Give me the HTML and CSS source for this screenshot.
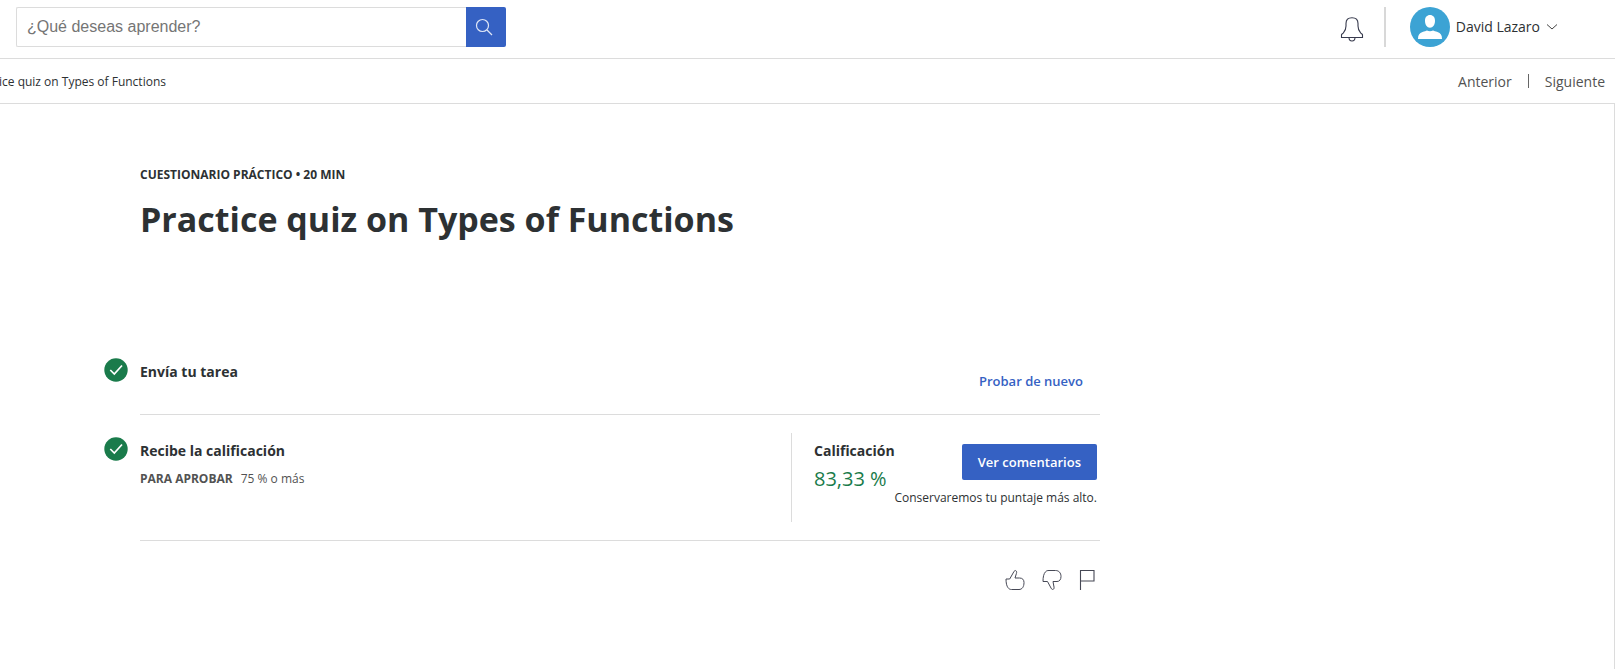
FILE: index.html
```html
<!DOCTYPE html>
<html lang="es">
<head>
<meta charset="utf-8">
<title>Practice quiz on Types of Functions</title>
<link rel="stylesheet" href="styles.css">
</head>
<body>
<header class="topbar">
  <form class="search">
    <input class="search-input" type="text" placeholder="¿Qué deseas aprender?" aria-label="¿Qué deseas aprender?">
    <button class="search-button" type="button" aria-label="Buscar">
      <svg width="18" height="18" viewBox="0 0 18 18" fill="none" stroke="#dfe6f6" stroke-width="1.2"><circle cx="7.5" cy="7.5" r="6"/><path d="M12 12l5 5"/></svg>
    </button>
  </form>
  <div class="account">
    <button class="icon-button" type="button" aria-label="Notificaciones">
      <svg width="24" height="26" viewBox="0 0 24 26" fill="none" stroke="#373a4d" stroke-width="1.1"><path d="M1.500 21.500v-2.700c0-.8 1-1 1.900-2C5.500 14.500 6 12.500 6 10V7.500C6 3.500 8.500 1.700 12 1.700S18 3.500 18 7.500V10c0 2.500.5 4.500 2.600 6.800.9 1 1.900 1.200 1.900 2v2.700z"/><path d="M9 21.500c0 2.500 1.200 3.500 3 3.500s3-1 3-3.500"/></svg>
    </button>
    <span class="account-divider"></span>
    <button class="profile" type="button">
      <svg width="40" height="40" viewBox="0 0 40 40"><circle cx="20" cy="20" r="20" fill="#3ca3d4"/><path fill="#fff" d="M20 8c3 0 5 2.200 5 5.700 0 3.800-2 7-5 7s-5-3.200-5-7C15 10.200 17 8 20 8zM8 32c0-4 1.300-6 4.500-7 2-.6 3.500-1 4.500-1.500 1.800 1 4.200 1 6 0 1 .5 2.500.9 4.500 1.500 3.200 1 4.500 3 4.500 7z"/></svg>
      <span class="profile-name">David Lazaro</span>
      <svg class="chevron" width="12" height="8" viewBox="0 0 12 8" fill="none" stroke="#444" stroke-width="1"><path d="M1 1.500l5 4.500 5-4.500"/></svg>
    </button>
  </div>
</header>
<nav class="subnav">
  <span class="crumb">ice quiz on Types of Functions</span>
  <div class="pager">
    <a href="#">Anterior</a>
    <span class="pager-divider"></span>
    <a href="#">Siguiente</a>
  </div>
</nav>
<main class="page">
  <div class="content">
    <p class="kicker">CUESTIONARIO PRÁCTICO • 20 MIN</p>
    <h1 class="title">Practice quiz on Types of Functions</h1>
    <section class="step step-submit">
      <svg class="check" width="24" height="24" viewBox="0 0 24 24"><circle cx="12" cy="12" r="11.700" fill="#1a7b4b"/><path d="M6.300 12l4 4L18 7.500" fill="none" stroke="#fff" stroke-width="1.700"/></svg>
      <h2 class="heading">Envía tu tarea</h2>
      <button class="retry" type="button">Probar de nuevo</button>
    </section>
    <section class="step step-grade">
      <svg class="check" width="24" height="24" viewBox="0 0 24 24"><circle cx="12" cy="12" r="11.700" fill="#1a7b4b"/><path d="M6.300 12l4 4L18 7.500" fill="none" stroke="#fff" stroke-width="1.700"/></svg>
      <div class="receive">
        <h2 class="heading">Recibe la calificación</h2>
        <p class="passing"><strong>PARA APROBAR</strong><span>75 % o más</span></p>
      </div>
      <div class="result">
        <div class="grade">
          <h2 class="heading">Calificación</h2>
          <p class="score">83,33 %</p>
        </div>
        <div class="feedback">
          <button class="comments" type="button">Ver comentarios</button>
          <p class="note">Conservaremos tu puntaje más alto.</p>
        </div>
      </div>
    </section>
    <div class="reactions">
      <button class="icon-button" type="button" aria-label="Me gusta">
        <svg width="20" height="22" viewBox="0 0 20 22" fill="none" stroke="#464855" stroke-width="1"><path d="M1 10h3.700L8.700 3c.6-1.200 1.300-1.700 2.100-1.300 1 .5 1 1.600.6 2.800L10 9h4.500c3 0 4.500 1.800 4.500 4.500 0 4.500-2 7-5 7H6.500c-1.500 0-2.500-.5-3.500-1.800C1.700 17 1 14 1 10z"/></svg>
      </button>
      <button class="icon-button" type="button" aria-label="No me gusta">
        <svg width="20" height="22" viewBox="0 0 20 22" fill="none" stroke="#464855" stroke-width="1"><path d="M1 12.500C1 8 1.700 4.800 3.500 2.800 4.500 1.700 5.500 1.500 7 1.500h6.500c3.500 0 5.500 2.500 5.500 6 0 3-1.500 5-4 5h-4l1 5.500c.2 1.200 0 2-.8 2.300-.9.400-1.600 0-2.200-1.300l-3.500-6.500z"/></svg>
      </button>
      <button class="icon-button" type="button" aria-label="Denunciar">
        <svg width="16" height="22" viewBox="0 0 16 22" fill="none" stroke="#464855" stroke-width="1.100"><path d="M1.500 21V1.500h13.500v10.500H1.500"/></svg>
      </button>
    </div>
  </div>
</main>
</body>
</html>
```
FILE: styles.css
```css
* { box-sizing: border-box; }
body {
  margin: 0;
  min-height: 100vh;
  display: flex;
  flex-direction: column;
  overflow-x: hidden;
  background: #fff;
  color: #2d3133;
  font-family: "Open Sans", sans-serif;
  font-size: 14px;
}
h1, h2, p { margin: 0; }
button {
  margin: 0;
  padding: 0;
  border: 0;
  background: none;
  color: inherit;
  font-family: inherit;
  font-size: 14px;
  cursor: pointer;
}
a { color: inherit; text-decoration: none; }
svg { display: block; flex: none; }

.topbar {
  display: flex;
  align-items: flex-start;
  justify-content: space-between;
  padding: 7px 57px 11px 16px;
  border-bottom: 1px solid #dcdcdc;
}
.search { display: flex; width: 490px; height: 40px; }
.search-input {
  flex: 1;
  min-width: 0;
  padding: 0 10px;
  border: 1px solid #dcdcdc;
  border-right: 0;
  border-radius: 2px 0 0 2px;
  color: #333;
  font-family: "Liberation Sans", Arial, sans-serif;
  font-size: 16px;
}
.search-input::placeholder { color: #757575; opacity: 1; }
.search-button {
  display: flex;
  align-items: center;
  justify-content: center;
  width: 40px;
  padding-right: 4px;
  border-radius: 0 2px 2px 0;
  background: #3561c3;
}
.account { display: flex; align-items: center; height: 40px; }
.account > .icon-button { padding-top: 4px; }
.account-divider {
  width: 2px;
  height: 40px;
  margin: 0 24px 0 20px;
  background: #d8d8d8;
}
.profile { display: flex; align-items: center; gap: 6px; }
.profile-name { padding-bottom: 2px; }

.subnav {
  display: flex;
  align-items: center;
  justify-content: space-between;
  height: 45px;
  padding-right: 10px;
  border-bottom: 1px solid #dcdcdc;
}
.crumb { margin-left: -1px; font-size: 12px; }
.pager { display: flex; align-items: center; gap: 16px; color: #525252; }
.pager-divider { width: 1px; height: 14px; background: #666; }

.page {
  flex: 1;
  padding: 61px 140px 40px;
  border-right: 1px solid #dcdcdc;
}
.content { max-width: 960px; }
.kicker { font-size: 12px; font-weight: 700; line-height: 20px; }
.title { margin-top: 10px; font-size: 34px; font-weight: 700; line-height: 48px; }
.heading { font-size: 14px; font-weight: 700; line-height: 20px; }
.step { position: relative; display: flex; border-bottom: 1px solid #dcdcdc; }
.check { position: absolute; left: -36px; }
.step-submit {
  align-items: flex-start;
  justify-content: space-between;
  margin-top: 119px;
  padding-bottom: 23px;
}
.step-submit .check { top: -4px; }
.retry {
  margin-top: 9px;
  padding: 0 17px;
  color: #3561c3;
  font-size: 13px;
  font-weight: 600;
  line-height: 20px;
}
.step-grade { padding: 18px 0; }
.step-grade .check { top: 22px; }
.receive { flex: 1; padding-top: 8px; }
.passing {
  display: flex;
  gap: 8px;
  margin-top: 8px;
  color: #525252;
  font-size: 12px;
  line-height: 20px;
}
.result {
  display: flex;
  justify-content: space-between;
  width: 309px;
  height: 89px;
  padding: 8px 3px 0 22px;
  border-left: 1px solid #dcdcdc;
}
.grade { flex: none; width: 80px; }
.score { margin-top: 4px; color: #1a7b4b; font-size: 20px; line-height: 28px; white-space: nowrap; }
.feedback { display: flex; flex-direction: column; align-items: flex-end; padding-top: 3px; }
.comments {
  height: 36px;
  padding: 0 16px;
  border-radius: 2px;
  background: #3561c3;
  color: #fff;
  font-size: 13px;
  font-weight: 600;
}
.note { margin-top: 8px; font-size: 12px; line-height: 20px; white-space: nowrap; }
.reactions { display: flex; justify-content: flex-end; gap: 17px; padding: 28px 5px 0 0; }
```
